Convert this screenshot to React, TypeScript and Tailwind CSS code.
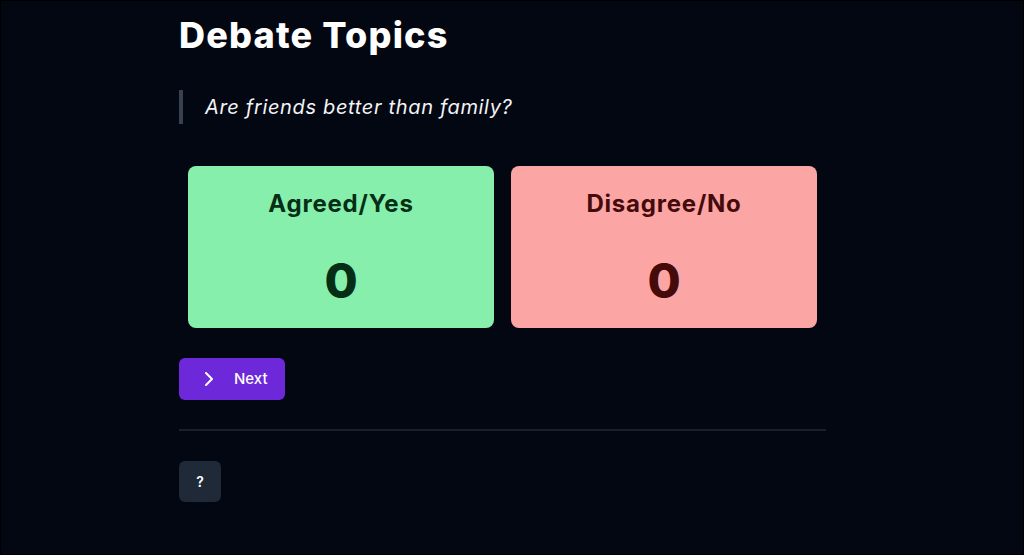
import React from 'react';
import { ChevronRight } from 'lucide-react';

const sides = [
  { label: 'Agreed/Yes', count: 0, card: 'bg-[#86efac]', text: 'text-[#052e16]' },
  { label: 'Disagree/No', count: 0, card: 'bg-[#fca5a5]', text: 'text-[#450a0a]' },
];

export default function App() {
  return (
    <div className="h-[555px] w-full overflow-hidden border border-black bg-[#030712] font-['Inter',sans-serif]">
      <div className="ml-[178px] w-[647px] pt-[14px]">
        <h1 className="text-[36px] leading-[40px] font-extrabold tracking-[0.033em] text-white">Debate Topics</h1>

        <blockquote className="mt-[35px] border-l-4 border-[#374151] pl-[22px] text-[20px] leading-[34px] italic tracking-[0.033em] text-gray-100">
          Are friends better than family?
        </blockquote>

        <div className="mt-[42px] grid grid-cols-2 gap-[17px] px-[9px]">
          {sides.map((side) => (
            <div
              key={side.label}
              className={`flex h-[162px] flex-col items-center rounded-lg pt-[22px] ${side.card} ${side.text}`}
            >
              <h2 className="text-2xl leading-8 font-bold tracking-[0.033em]">{side.label}</h2>
              <p className="mt-[37px] text-5xl leading-[48px] font-extrabold">{side.count}</p>
            </div>
          ))}
        </div>

        <button className="mt-[30px] flex h-[42px] w-[106px] items-center gap-[13px] rounded-md bg-[#6d28d9] pl-[18px] text-[15px] font-medium text-white">
          <ChevronRight size={24} strokeWidth={2} />
          Next
        </button>

        <div className="mt-[29px] h-[2px] bg-[#1c1f2b]" />

        <button className="mt-[30px] flex h-[41px] w-[42px] items-center justify-center rounded-md bg-[#1f2937] text-sm font-semibold text-white">
          ?
        </button>
      </div>
    </div>
  );
}
